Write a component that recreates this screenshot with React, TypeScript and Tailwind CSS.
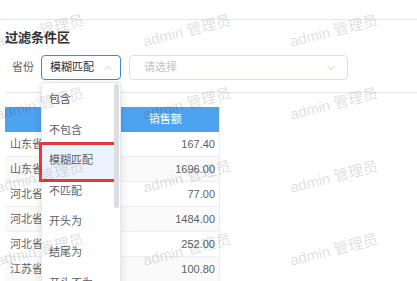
import { ChevronDown, ChevronUp } from "lucide-react";

const rows = [
  { p: "山东省", v: "167.40" },
  { p: "山东省", v: "1696.00" },
  { p: "河北省", v: "77.00" },
  { p: "河北省", v: "1484.00" },
  { p: "河北省", v: "252.00" },
  { p: "江苏省", v: "100.80" },
];

const options = ["包含", "不包含", "模糊匹配", "不匹配", "开头为", "结尾为", "开头不为"];

const font = "font-['Liberation_Sans','Noto_Sans_CJK_SC',sans-serif]";

export default function App() {
  return (
    <div className={`relative h-[281px] w-[417px] overflow-hidden bg-white ${font}`}>
      <div className="h-[20px] border-b border-[#e4e7ed]" />
      <div className="pl-[5px]">
        <div className="mt-[8px] h-[20px] text-[13px] font-bold leading-[20px] text-[#303133]">
          过滤条件区
        </div>

        <div className="mt-[7px] flex h-[25px] items-center">
          <span className="w-[36px] pl-[7px] text-[11px] text-[#606266]">省份</span>
          <div className="flex h-[25px] w-[80px] items-center justify-between rounded-[4px] border border-[#3f86e0] pl-[8px] pr-[6px]">
            <span className="text-[11px] text-[#303133]">模糊匹配</span>
            <ChevronUp size={12} strokeWidth={1.5} className="text-[#b4b8bf]" />
          </div>
          <div className="ml-[8px] flex h-[25px] w-[219px] items-center justify-between rounded-[4px] border border-[#dcdfe6] pl-[14px] pr-[10px]">
            <span className="text-[11px] text-[#c0c4cc]">请选择</span>
            <ChevronDown size={12} strokeWidth={1.5} className="text-[#b4b8bf]" />
          </div>
        </div>

        <div className="mt-[12px] border-t border-[#e4e7ed]" />

        <div className="mt-[14px] w-[215px] border-r border-[#ebeef5] text-[11px] text-[#606266]">
          <div className="flex h-[25px] items-center bg-[#4ea3f1] text-white">
            <div className="w-[107px] text-center">省份</div>
            <div className="w-[108px] text-center">销售额</div>
          </div>
          {rows.map((r, i) => (
            <div
              key={i}
              className={`flex h-[25px] items-center border-b border-[#ebeef5] ${i % 2 === 1 ? "bg-[#fafafa]" : "bg-white"}`}
            >
              <div className="w-[107px] pl-[5px]">{r.p}</div>
              <div className="w-[108px] pr-[4px] text-right">{r.v}</div>
            </div>
          ))}
        </div>
      </div>

      {/* 下拉面板 */}
      <div className="absolute left-[41px] top-[82px] h-[220px] w-[80px] rounded-[4px] border border-[#e4e7ed] bg-white pt-[1px] shadow-[0_2px_10px_rgba(0,0,0,0.12)]">
        <div className="absolute left-[-3px] top-[59px] h-[40px] w-[78px] border-[3px] border-[#e53935] bg-[#edf3fe]" />
        {options.map((o) => (
          <div key={o} className="relative flex h-[30.6px] items-center pl-[7px] text-[11px] text-[#606266]">
            {o}
          </div>
        ))}
        <div className="absolute right-[1px] top-[1px] h-[124px] w-[5px] rounded-full bg-[#dcdde0]" />
      </div>

      {/* 水印 */}
      <div className="pointer-events-none absolute left-[-33px] top-[-5px] grid grid-cols-[repeat(4,147px)] auto-rows-[73px]">
        {Array.from({ length: 16 }).map((_, i) => (
          <div key={i} className="flex items-center justify-center">
            <span className="-rotate-[14deg] whitespace-nowrap text-[15px] text-black/15">
              admin 管理员
            </span>
          </div>
        ))}
      </div>
    </div>
  );
}
